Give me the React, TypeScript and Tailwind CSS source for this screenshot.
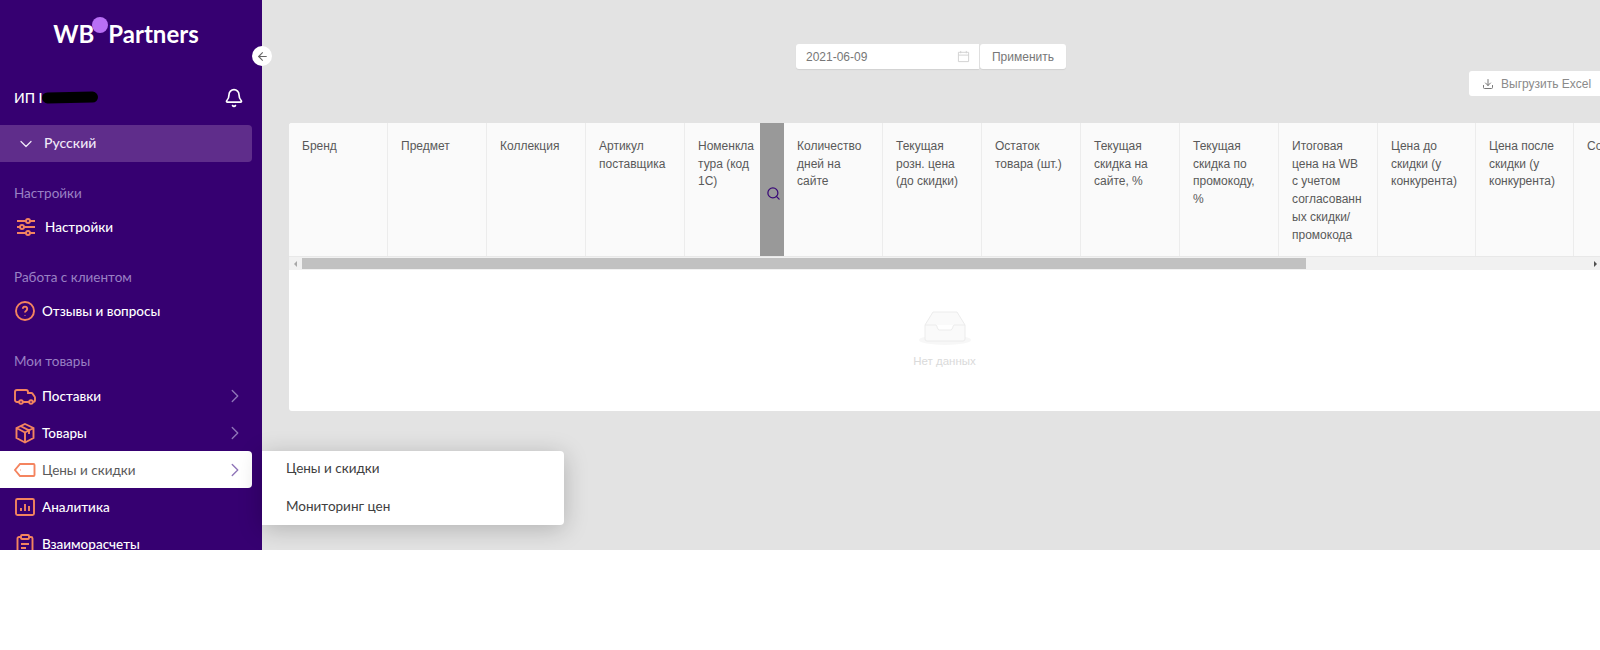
import { ArrowLeft, Bell, ChevronDown, ChevronRight, Download, Search } from "lucide-react";
import type { ReactNode } from "react";

const columnsBefore = [
  { title: "Бренд", width: "w-[99px]" },
  { title: "Предмет", width: "w-[99px]" },
  { title: "Коллекция", width: "w-[99px]" },
  { title: "Артикул поставщика", width: "w-[99px]" },
];

const columnsAfter = [
  { title: "Количество дней на сайте", width: "w-[99px]" },
  { title: "Текущая розн. цена (до скидки)", width: "w-[99px]" },
  { title: "Остаток товара (шт.)", width: "w-[99px]" },
  { title: "Текущая скидка на сайте, %", width: "w-[99px]" },
  { title: "Текущая скидка по промокоду, %", width: "w-[99px]" },
  { title: "Итоговая цена на WB с учетом согласованн ых скидки/ промокода", width: "w-[99px]" },
  { title: "Цена до скидки (у конкурента)", width: "w-[98px]" },
  { title: "Цена после скидки (у конкурента)", width: "w-[98px]" },
  { title: "Со", width: "w-[40px] whitespace-nowrap" },
];

const iconClass = "h-[22px] w-[22px] shrink-0 fill-none stroke-[#f4845f] stroke-[1.9]";

function SlidersIcon() {
  return (
    <svg viewBox="0 0 22 22" className={`${iconClass} ml-px mr-[2px]`}>
      <path d="M2 5h9M15 5h5M2 11h3M9 11h11M2 17h9M15 17h5" />
      <circle cx="13" cy="5" r="2" />
      <circle cx="7" cy="11" r="2" />
      <circle cx="13" cy="17" r="2" />
    </svg>
  );
}

function QuestionIcon() {
  return (
    <svg viewBox="0 0 22 22" className={iconClass}>
      <circle cx="11" cy="11" r="9" />
      <path d="M8.8 8.8a2.2 2.2 0 1 1 3.4 1.9c-.8.5-1.2 1-1.2 1.8M11 15v.4" />
    </svg>
  );
}

function TruckIcon() {
  return (
    <svg viewBox="0 0 22 22" className={iconClass}>
      <path d="M5 17H3a2 2 0 0 1-2-2V7a2 2 0 0 1 2-2h9a2 2 0 0 1 2 2v1h3.500a1 1 0 0 1 .8.4l2.200 3a2 2 0 0 1 .5 1.300V15a2 2 0 0 1-2 2h-1M9 17h6" />
      <circle cx="7" cy="17" r="1.800" />
      <circle cx="17" cy="17" r="1.800" />
    </svg>
  );
}

function BoxIcon() {
  return (
    <svg viewBox="0 0 22 22" className={iconClass}>
      <path d="M11 2l8.500 4v10L11 20.500 2.500 16V6L11 2zM2.500 6l8.500 4.500L19.500 6M11 10.500v10M6.500 4l8.500 4.400V12" />
    </svg>
  );
}

function TagIcon() {
  return (
    <svg viewBox="0 0 22 22" className={iconClass}>
      <path d="M6 5h13.500a1 1 0 0 1 1 1v10a1 1 0 0 1-1 1H6l-5-6 5-6z" />
      <path d="M6.500 11h.4" />
    </svg>
  );
}

function ChartIcon() {
  return (
    <svg viewBox="0 0 22 22" className={iconClass}>
      <rect x="2" y="3" width="18" height="16" rx="1.500" />
      <path d="M7 15v-3M11 15V8M15 15v-5" />
    </svg>
  );
}

function ClipboardIcon() {
  return (
    <svg viewBox="0 0 22 22" className={iconClass}>
      <path d="M7 4H5a1.500 1.500 0 0 0-1.500 1.500v14A1.500 1.500 0 0 0 5 21h12a1.500 1.500 0 0 0 1.500-1.500v-14A1.500 1.500 0 0 0 17 4h-2" />
      <rect x="7" y="2" width="8" height="4" rx="1" />
      <path d="M7 11h8M7 15h5" />
    </svg>
  );
}

function CalendarIcon() {
  return (
    <svg viewBox="0 0 14 14" className="h-[13px] w-[13px] fill-none stroke-[#d0d0d0]">
      <path d="M1.500 2.500h11v10h-11zM1.500 5.500h11M4 1v2.500M10 1v2.500" />
    </svg>
  );
}

function EmptyIcon() {
  return (
    <svg viewBox="0 0 54 36" className="h-[36px] w-[54px]">
      <ellipse cx="27" cy="30" rx="26" ry="5" fill="#f7f7f7" />
      <path
        d="M15 2h24l8 13v14a2 2 0 0 1-2 2H9a2 2 0 0 1-2-2V15L15 2z"
        fill="#fafafa"
        stroke="#ececec"
      />
      <path d="M7 15h11c1 0 1.500 5 3 5h12c1.500 0 2-5 3-5h11" fill="#ffffff" stroke="#ececec" />
    </svg>
  );
}

function SectionLabel({ children }: { children: ReactNode }) {
  return <p className="h-[21px] pl-[14px] text-[13.500px] leading-[21px] text-[#9a80c4]">{children}</p>;
}

type NavRowProps = {
  icon: ReactNode;
  label: string;
  arrow?: boolean;
  active?: boolean;
};

function NavRow({ icon, label, arrow, active }: NavRowProps) {
  return (
    <div
      className={
        active
          ? "flex h-[37px] w-[252px] items-center rounded-r-[4px] bg-white pl-[14px] pr-[6px] text-[#5a5a5a]"
          : "flex h-[37px] w-[252px] items-center pl-[14px] pr-[6px] font-medium text-white"
      }
    >
      {icon}
      <span className="ml-[6px] flex-1 pt-px text-[13.500px]">{label}</span>
      {arrow ? <ChevronRight className="h-[22px] w-[22px] stroke-[1.5] text-[#8f75b8]" /> : null}
    </div>
  );
}

function HeaderCell({ title, width }: { title: string; width: string }) {
  return (
    <div className={`${width} shrink-0 border-r border-[#ececec] pl-[13px] pr-[12px] pt-[15px] break-words last:border-r-0 last:pr-0`}>
      {title}
    </div>
  );
}

export default function App() {
  return (
    <div className="relative flex h-[550px] overflow-hidden bg-[#e3e3e3] font-['Liberation_Sans',Arial,sans-serif]">
      <aside className="h-full w-[262px] shrink-0 bg-[#360071] font-['Lato','Noto_Sans',sans-serif]">
        <div className="relative flex h-[70px] items-start justify-center pr-[10px] pt-[17px] text-[24px] font-bold leading-[34px] text-white">
          <span>WB</span>
          <span className="ml-[14px]">Partners</span>
          <span className="absolute left-[92px] top-[17px] h-[16px] w-[16px] rounded-full bg-[#b96ff5]" />
        </div>
        <div className="flex h-[55px] items-center justify-between pl-[14px] pr-[18px]">
          <div className="relative text-[14px] font-medium text-white">
            ИП I
            <span className="absolute left-[28px] top-[5px] h-[11px] w-[56px] -rotate-1 rounded-full bg-black" />
          </div>
          <Bell className="h-[20px] w-[20px] stroke-[2] text-white" />
        </div>
        <div className="flex h-[37px] w-[252px] items-center rounded-r-[4px] bg-[#5f2d8b] pl-[16px] text-[14px] font-medium text-[#f0e8f7]">
          <ChevronDown className="h-[20px] w-[20px] stroke-[1.5]" />
          <span className="ml-[8px] -translate-y-px">Русский</span>
        </div>
        <div className="pt-[21px]">
          <SectionLabel>Настройки</SectionLabel>
          <div className="mt-[4px]">
            <NavRow icon={<SlidersIcon />} label="Настройки" />
          </div>
        </div>
        <div className="pt-[22px]">
          <SectionLabel>Работа с клиентом</SectionLabel>
          <div className="mt-[4px]">
            <NavRow icon={<QuestionIcon />} label="Отзывы и вопросы" />
          </div>
        </div>
        <div className="pt-[22px]">
          <SectionLabel>Мои товары</SectionLabel>
          <div className="mt-[5px]">
            <NavRow icon={<TruckIcon />} label="Поставки" arrow />
            <NavRow icon={<BoxIcon />} label="Товары" arrow />
            <NavRow icon={<TagIcon />} label="Цены и скидки" arrow active />
            <NavRow icon={<ChartIcon />} label="Аналитика" />
            <NavRow icon={<ClipboardIcon />} label="Взаиморасчеты" />
          </div>
        </div>
      </aside>

      <main className="min-w-0 flex-1">
        <div className="flex h-[71px] items-end justify-center pb-[2px] text-[12px]">
          <div className="flex h-[25px] w-[183px] items-center justify-between rounded-l-[3px] bg-white pl-[10px] pr-[9px] text-[#777777] shadow-[0_1px_1px_rgba(0,0,0,0.08)]">
            2021-06-09
            <CalendarIcon />
          </div>
          <div className="ml-px flex h-[25px] w-[86px] items-center justify-center rounded-[3px] bg-white text-[#777777] shadow-[0_1px_1px_rgba(0,0,0,0.08)]">
            Применить
          </div>
        </div>
        <div className="flex h-[52px] items-start justify-end">
          <div className="flex h-[25px] w-[131px] items-center rounded-l-[3px] bg-white pl-[13px] text-[12px] text-[#8a8a8a]">
            <Download className="h-[12px] w-[12px] text-[#777777]" />
            <span className="ml-[7px]">Выгрузить Excel</span>
          </div>
        </div>
        <section className="ml-[27px] h-[288px] overflow-hidden rounded-l-[3px] bg-white">
          <div className="flex h-[133px] bg-[#fafafa] text-[12px] leading-[17.700px] text-[#595959]">
            {columnsBefore.map((column) => (
              <HeaderCell key={column.title} title={column.title} width={column.width} />
            ))}
            <div className="w-[75px] shrink-0 pl-[13px] pr-[5px] pt-[15px] break-words">Номенклатура (код 1С)</div>
            <div className="flex w-[24px] shrink-0 items-center justify-center bg-[#999999] pl-[2px] pt-[8px]">
              <Search className="h-[15px] w-[15px] text-[#3a0a78]" />
            </div>
            {columnsAfter.map((column) => (
              <HeaderCell key={column.title} title={column.title} width={column.width} />
            ))}
          </div>
          <div className="flex h-[14px] items-center border-t border-[#e8e8e8] bg-[#f1f1f1]">
            <div className="flex w-[13px] justify-center">
              <span className="h-0 w-0 border-y-[3px] border-r-[3px] border-y-transparent border-r-[#a8a8a8]" />
            </div>
            <div className="h-[11px] w-[1004px] bg-[#c1c1c1]" />
            <div className="flex flex-1 justify-end pr-[3px]">
              <span className="h-0 w-0 border-y-[3px] border-l-[3px] border-y-transparent border-l-[#505050]" />
            </div>
          </div>
          <div className="flex flex-col items-center pt-[40px]">
            <EmptyIcon />
            <p className="mt-[7px] text-[11.500px] text-[#dadada]">Нет данных</p>
          </div>
        </section>
      </main>

      <button
        type="button"
        className="absolute left-[252px] top-[46px] flex h-[20px] w-[20px] items-center justify-center rounded-full bg-white"
      >
        <ArrowLeft className="h-[13px] w-[13px] text-[#666666]" />
      </button>

      <div className="absolute left-[262px] top-[451px] w-[302px] rounded-r-[4px] bg-white font-['Lato','Noto_Sans',sans-serif] text-[13.500px] text-[#404040] shadow-[0_4px_24px_rgba(0,0,0,0.22)]">
        <div className="flex h-[37px] -translate-y-px items-center pl-[24px]">Цены и скидки</div>
        <div className="flex h-[37px] items-center pl-[24px]">Мониторинг цен</div>
      </div>
    </div>
  );
}
